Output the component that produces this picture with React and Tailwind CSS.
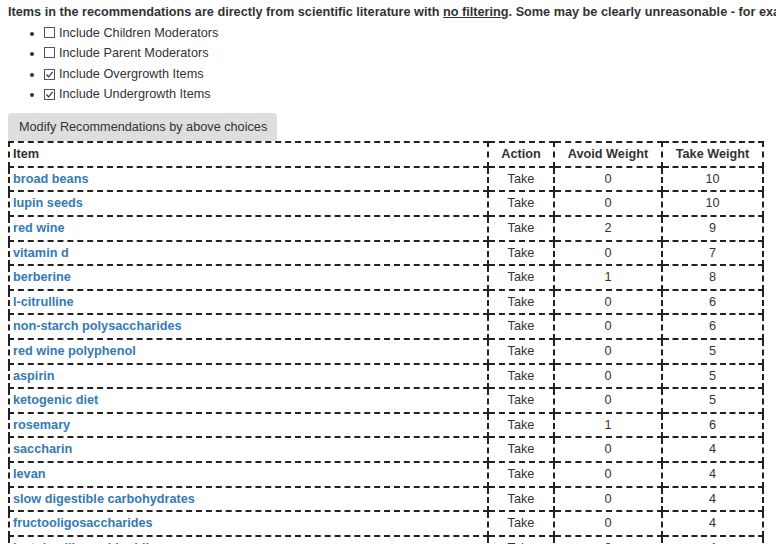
const options = [
  { label: "Include Children Moderators", checked: false },
  { label: "Include Parent Moderators", checked: false },
  { label: "Include Overgrowth Items", checked: true },
  { label: "Include Undergrowth Items", checked: true },
]

const rows = [
  ["broad beans", 0, 10],
  ["lupin seeds", 0, 10],
  ["red wine", 2, 9],
  ["vitamin d", 0, 7],
  ["berberine", 1, 8],
  ["l-citrulline", 0, 6],
  ["non-starch polysaccharides", 0, 6],
  ["red wine polyphenol", 0, 5],
  ["aspirin", 0, 5],
  ["ketogenic diet", 0, 5],
  ["rosemary", 1, 6],
  ["saccharin", 0, 4],
  ["levan", 0, 4],
  ["slow digestible carbohydrates", 0, 4],
  ["fructooligosaccharides", 0, 4],
  ["lactobacillus acidophilus", 0, 4],
]

const Box = ({ checked }) => (
  <span className="inline-flex align-[-1px] w-[11px] h-[11px] border border-[#555] bg-white mr-[4px] items-center justify-center">
    {checked && (
      <svg width="9" height="9" viewBox="0 0 9 9">
        <path d="M1.5 4.5 L3.6 6.8 L7.6 1.8" fill="none" stroke="#333" strokeWidth="1.2" />
      </svg>
    )}
  </span>
)

const cell = "border-2 border-dashed border-[#222] px-[3px] py-px leading-[20.6px]"

export default function App() {
  return (
    <div className="px-2 text-[12.7px] text-[#333] font-['Liberation_Sans',Arial,sans-serif] w-[776px] h-[544px] overflow-hidden">
      <p className="font-bold whitespace-nowrap leading-[20px] pt-[2px]">
        Items in the recommendations are directly from scientific literature with{" "}
        <span className="underline">no filtering</span>. Some may be clearly unreasonable - for example, items
      </p>
      <ul className="list-disc pl-[36px] mt-px">
        {options.map((o) => (
          <li key={o.label} className="h-[20.3px] leading-[20.3px]">
            <Box checked={o.checked} />
            {o.label}
          </li>
        ))}
      </ul>
      <button className="mt-[9px] bg-[#dedede] rounded-t-[4px] h-[28px] pl-[11px] pr-[10px] text-[12.7px] text-[#333] block">
        Modify Recommendations by above choices
      </button>
      <table className="border-collapse w-[756px] table-fixed">
        <colgroup>
          <col className="w-[479px]" />
          <col className="w-[66px]" />
          <col className="w-[108px]" />
          <col />
        </colgroup>
        <thead>
          <tr>
            <th className={`${cell} text-left`}>Item</th>
            <th className={`${cell} text-center`}>Action</th>
            <th className={`${cell} text-center`}>Avoid Weight</th>
            <th className={`${cell} text-center`}>Take Weight</th>
          </tr>
        </thead>
        <tbody>
          {rows.map(([name, avoid, take]) => (
            <tr key={name}>
              <td className={cell}>
                <a href="#" className="text-[#337ab7] font-bold">{name}</a>
              </td>
              <td className={`${cell} text-center`}>Take</td>
              <td className={`${cell} text-center`}>{avoid}</td>
              <td className={`${cell} text-center`}>{take}</td>
            </tr>
          ))}
        </tbody>
      </table>
    </div>
  )
}
